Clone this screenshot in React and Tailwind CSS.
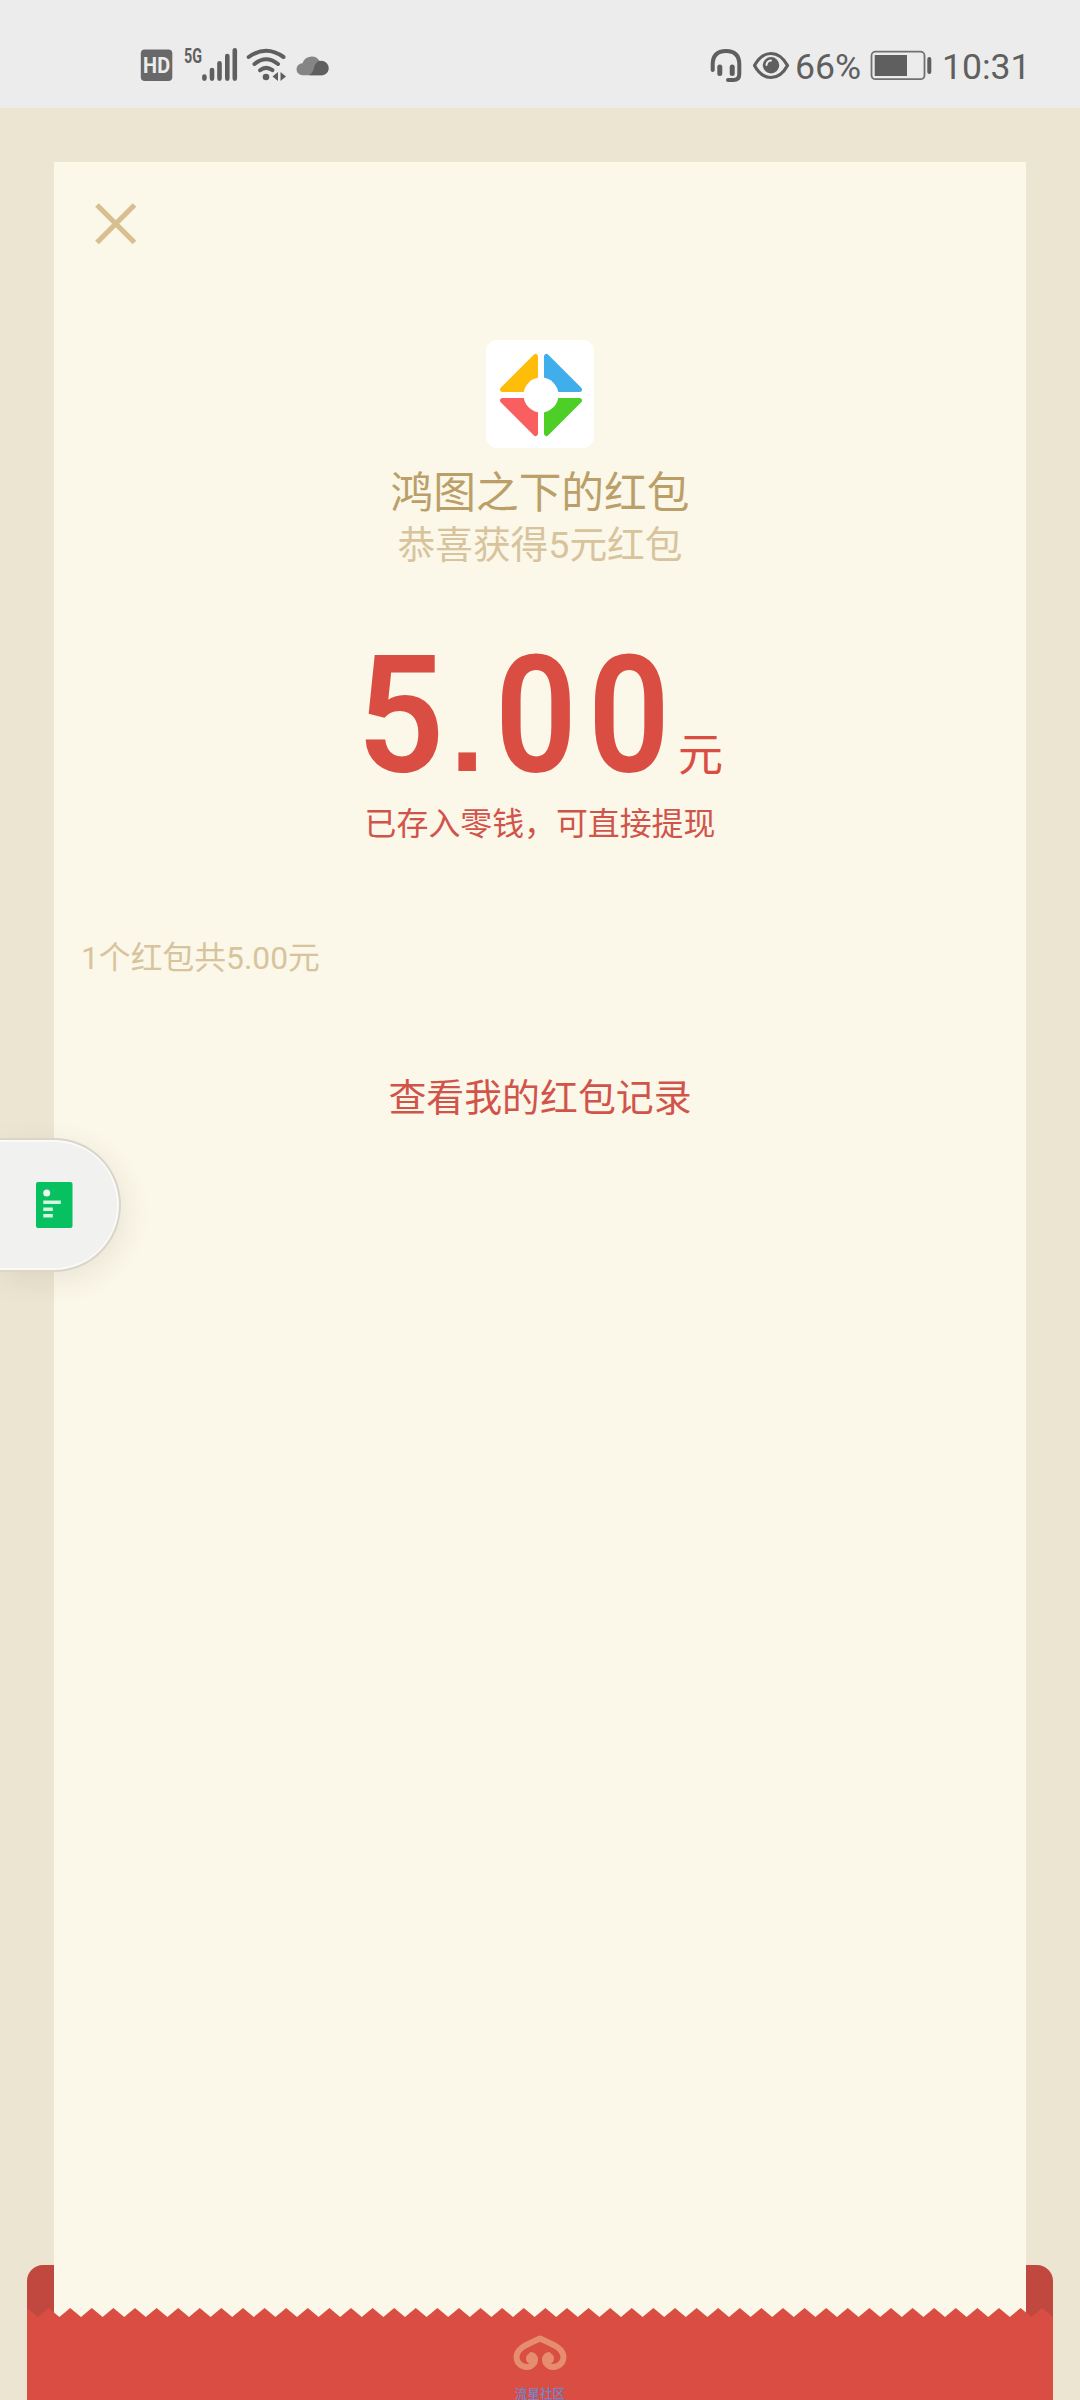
const TOOTH = 21.6;
const EDGE_WIDTH = 1026;

function StatusBar() {
  return (
    <header className="flex h-[108px] items-start justify-between bg-[#ececec] pl-[140px] pr-[51px] pt-[42px] text-[#5f5f5f]">
      <svg width="200" height="48" viewBox="140 42 200 48" aria-hidden="true">
        <rect x="140.8" y="49.5" width="31.5" height="31.5" rx="4" fill="#686868" />
        <text x="156.6" y="73.4" textAnchor="middle" fontSize="22" fontWeight="700" textLength="27" lengthAdjust="spacingAndGlyphs" fill="#ececec" className="font-['Roboto',sans-serif]">HD</text>
        <text x="184" y="62.5" fontSize="20" fontWeight="700" textLength="18" lengthAdjust="spacingAndGlyphs" fill="#5f5f5f" className="font-['Roboto',sans-serif]">5G</text>
        <g stroke="#5f5f5f" strokeWidth="4.6" strokeLinecap="round">
          <path d="M204.4 76.6v2M212 70v8.6M219.5 63.3v15.3M227.3 56v22.6M234.8 50.3v28.3" />
        </g>
        <g fill="none" stroke="#5f5f5f" strokeWidth="4" strokeLinecap="round">
          <path d="M248.7 57Q266 44.5 283.5 57" />
          <path d="M254.5 64Q266 54.5 278 64" />
          <path d="M260 70.2Q266 65.5 272.5 70.2" />
        </g>
        <circle cx="266" cy="77" r="3.3" fill="#5f5f5f" />
        <path d="M278 72v9l-5.5-4.5zM280.5 72l5.5 4.5-5.5 4.5z" fill="#5f5f5f" />
        <path d="M302.5 75.3a6 6 0 0 1 0-12 9.5 9.5 0 0 1 17-2.5 7.3 7.3 0 0 1 0 14.5z" fill="#858585" />
        <path d="M309 75.3q3.500-2 5-7a7.4 7.300 0 1 1 6 7z" fill="#5f5f5f" />
      </svg>
      <div className="flex h-[48px] items-center">
        <svg width="90" height="48" viewBox="705 42 90 48" aria-hidden="true">
          <path d="M712.7 70V64.5q0-13.5 13.3-13.5t13.3 13.5V74q0 6-6 6H728" fill="none" stroke="#5f5f5f" strokeWidth="4" strokeLinecap="round" />
          <path d="M719.8 67v6.5M732.2 67v6.5" stroke="#5f5f5f" strokeWidth="5" strokeLinecap="round" />
          <path d="M754.5 65.5Q761 53.5 771 53.5T787.5 65.5Q781 77.5 771 77.5T754.5 65.5z" fill="none" stroke="#5f5f5f" strokeWidth="3.2" strokeLinejoin="round" />
          <circle cx="771" cy="65.3" r="8.2" fill="#5f5f5f" />
          <path d="M766.5 65q.3-4 4.5-4.5" fill="none" stroke="#ececec" strokeWidth="2" strokeLinecap="round" />
        </svg>
        <span className="mt-[2px] w-[75px] whitespace-nowrap font-['Roboto',sans-serif] text-[35.6px] leading-[48px]">66%</span>
        <svg width="62" height="48" viewBox="870 42 62 48" aria-hidden="true">
          <rect x="871.5" y="51.7" width="53" height="27.5" rx="4" fill="none" stroke="#707070" strokeWidth="1.8" />
          <rect x="874.7" y="55" width="32.3" height="21" fill="#5f5f5f" />
          <path d="M929.3 59v13" stroke="#5f5f5f" strokeWidth="4" strokeLinecap="round" />
        </svg>
        <span className="ml-[10px] mt-[2px] w-[87px] whitespace-nowrap font-['Roboto',sans-serif] text-[35.6px] leading-[48px]">10:31</span>
      </div>
    </header>
  );
}

function GameLogo() {
  return (
    <div className="size-[108px] rounded-[11px] bg-white">
      <svg viewBox="0 0 108 108" className="size-full" aria-hidden="true">
        <g strokeWidth="5" strokeLinejoin="round">
          <path d="M49.5 16.5V49.5H16.5z" fill="#fdbd08" stroke="#fdbd08" />
          <path d="M60.5 16.5V49.5H93.5z" fill="#40aeea" stroke="#40aeea" />
          <path d="M49.5 93.5V60.5H16.5z" fill="#f95f61" stroke="#f95f61" />
          <path d="M60.5 93.5V60.5H93.5z" fill="#4dcf27" stroke="#4dcf27" />
        </g>
        <circle cx="55" cy="55" r="17.5" fill="#fff" />
      </svg>
    </div>
  );
}

function Amount() {
  return (
    <div className="mt-[66px] flex h-[160px] w-[368px] items-baseline pl-[1px] text-[#d94d42]">
      <div className="flex w-[318px] shrink-0 items-baseline whitespace-nowrap font-semibold leading-[160px]">
        <span className="w-[93px] shrink-0 origin-left scale-x-[0.94] text-[163px]">5</span>
        <span className="w-[45px] shrink-0 font-['Liberation_Sans',sans-serif] text-[124px] leading-[100px]">.</span>
        <span className="w-[180px] shrink-0 origin-left scale-x-[0.88] text-[163px] tracking-[12.5px]">00</span>
      </div>
      <span className="ml-[3px] text-[45px] leading-[60px]">元</span>
    </div>
  );
}

function EnvelopeEdge() {
  let d = "M0 0";
  for (let x = 0; x < EDGE_WIDTH; x += TOOTH) {
    d += `L${x + TOOTH / 2} 9L${x + TOOTH} 0`;
  }
  d += "V10H0z";
  return (
    <svg width={EDGE_WIDTH} height="10" viewBox={`0 0 ${EDGE_WIDTH} 10`} className="block" aria-hidden="true">
      <path d={d} fill="#d94d42" />
    </svg>
  );
}

function FloatingTab() {
  return (
    <button
      className="absolute left-0 top-[1138px] flex h-[134px] w-[121px] items-center rounded-r-full border-y-2 border-r-2 border-[#d9d5cb] bg-[#f1f1f0] pl-[36px] shadow-[4px_8px_28px_rgba(90,80,40,0.1),inset_-2px_0_0_#fbfaf6,inset_0_2px_0_#fbfaf6,inset_0_-2px_0_#fbfaf6]"
      aria-label="红包"
    >
      <svg width="37" height="46" viewBox="0 0 37 46" aria-hidden="true">
        <rect width="36.5" height="46" rx="2" fill="#07c160" />
        <circle cx="10.7" cy="11" r="3.5" fill="#eefaf2" />
        <path d="M7.3 18.5h17.5v3.5H7.3zM7.3 25.5h9.5V29H7.3zM7.3 32h9.5v3.5H7.3z" fill="#d6f5e2" />
      </svg>
    </button>
  );
}

export default function App() {
  return (
    <div className="relative flex h-[2400px] w-[1080px] flex-col overflow-hidden bg-[#ece5d2] font-['Roboto','Noto_Sans_CJK_SC',sans-serif]">
      <StatusBar />
      <main className="relative flex-1 px-[54px] pt-[54px]">
        <div className="absolute inset-x-[27px] bottom-0 h-[135px] rounded-t-[16px] bg-[#c0483f]" />
        <section className="relative flex h-full flex-col items-center bg-[#fbf7e9]">
          <button className="ml-[41px] mt-[41px] self-start" aria-label="关闭">
            <svg width="42" height="42" viewBox="0 0 42 42" aria-hidden="true">
              <path d="M2 2L39.5 39.5M39.5 2L2 39.5" stroke="#d8bf90" strokeWidth="5.2" />
            </svg>
          </button>
          <div className="mt-[95px]">
            <GameLogo />
          </div>
          <h1 className="mt-[18px] whitespace-nowrap text-[42.7px] leading-[54px] text-[#bb9f69]">鸿图之下的红包</h1>
          <p className="whitespace-nowrap text-[37.7px] leading-[50px] text-[#d8c49c]">恭喜获得5元红包</p>
          <Amount />
          <p className="mt-[5px] whitespace-nowrap text-[31.9px] leading-[46px] text-[#d1544a]">已存入零钱，可直接提现</p>
          <p className="ml-[27px] mt-[88px] self-start whitespace-nowrap text-[31.8px] leading-[46px] text-[#d8c49c]">1个红包共5.00元</p>
          <a className="mt-[89px] whitespace-nowrap text-[37.9px] leading-[56px] text-[#d1544a]">查看我的红包记录</a>
        </section>
        <footer className="absolute inset-x-[27px] bottom-0 h-[92px]">
          <EnvelopeEdge />
          <div className="-mt-px flex h-[83px] flex-col items-center bg-[#d94d42] pt-[18px]">
            <svg width="56" height="40" viewBox="0 0 56 40" fill="none" className="shrink-0" aria-hidden="true">
              <path
                d="M19.5 20c5 2 4.5 8-.5 11-5 2.500-14-.5-14.500-8.500C4.500 12 19 8 28 3.500 37 8 51.500 12 51.500 22.500c-.5 8-9.500 11-14.500 8.500-5-3-5.500-9-.5-11"
                stroke="#e68d70"
                strokeWidth="6"
                strokeLinejoin="round"
                strokeLinecap="round"
              />
              <circle cx="19.5" cy="23.5" r="5.5" fill="#e68d70" />
              <circle cx="36.5" cy="23.5" r="5.5" fill="#e68d70" />
            </svg>
            <span className="mt-[10px] whitespace-nowrap text-[12.6px] font-medium leading-[18px] text-[#6f86d0]">流星社区</span>
          </div>
        </footer>
      </main>
      <FloatingTab />
    </div>
  );
}
